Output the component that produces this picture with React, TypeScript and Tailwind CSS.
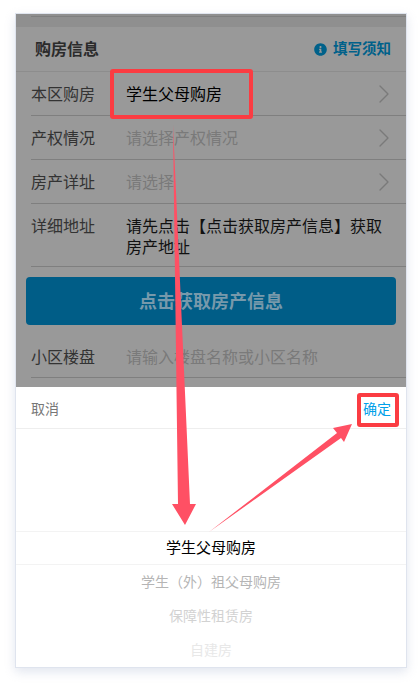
import { ChevronRight } from "lucide-react";
import { FaInfoCircle } from "react-icons/fa";

const cjk = "font-['Liberation_Sans','Noto_Sans_CJK_SC',sans-serif]";

function Row({ label, value, dark }: { label: string; value: string; dark?: boolean }) {
  return (
    <div className="ml-[15px] h-[44px] flex items-center border-b border-[#7f7f7f]">
      <span className="w-[95px] pt-[2px] text-[16px] text-[#333]">{label}</span>
      <span className={`flex-1 pt-[2px] text-[16px] ${dark ? "text-black" : "text-[#7a7a7a]"}`}>{value}</span>
      <ChevronRight className="w-[32px] h-[32px] mr-[6px] text-[#7a7a7a]" strokeWidth={1} />
    </div>
  );
}

export default function App() {
  return (
    <div className={`relative w-[420px] h-[685px] bg-white overflow-hidden ${cjk}`}>
      <div className="pt-[13px] pl-[15px] pr-[13px]">
        <div className="border border-[#dfe4ee] shadow-[0_4px_10px_rgba(190,200,220,0.45)]">
          <div className="h-[373px] bg-[#999] overflow-hidden">
            <div className="h-[13px] bg-[#8f8f8f] pl-[15px]">
              <div className="h-[3px] border-b border-[#7f7f7f]" />
            </div>
            <div className="h-[45px] flex items-center justify-between pl-[19px] pr-[15px] pt-[1px] border-b border-[#8d8d8d]">
              <span className="text-[16px] font-bold text-[#2b2b2b]">购房信息</span>
              <span className="flex items-center gap-[6px] text-[14.5px] font-bold text-[#00618a]">
                <FaInfoCircle className="w-[13px] h-[13px]" />
                填写须知
              </span>
            </div>
            <Row label="本区购房" value="学生父母购房" dark />
            <Row label="产权情况" value="请选择产权情况" />
            <Row label="房产详址" value="请选择" />
            <div className="ml-[15px] h-[63px] flex border-b border-[#7f7f7f] pt-[12px]">
              <span className="w-[95px] shrink-0 text-[16px] leading-[21px] text-[#333]">详细地址</span>
              <span className="text-[16px] leading-[21px] text-[#111] pr-[10px]">
                请先点击【点击获取房产信息】获取房产地址
              </span>
            </div>
            <div className="mx-[10px] mt-[10px] h-[48px] pt-[2px] rounded-[4px] bg-[#005d87] flex items-center justify-center text-[18px] font-bold text-[#7799ab]">
              点击获取房产信息
            </div>
            <div className="ml-[15px] mt-[10px] h-[43px] flex items-center pt-[3px] border-b border-[#7f7f7f]">
              <span className="w-[95px] text-[16px] text-[#333]">小区楼盘</span>
              <span className="text-[16px] text-[#7a7a7a]">请输入楼盘名称或小区名称</span>
            </div>
          </div>
          <div className="bg-white h-[280px]">
            <div className="h-[42px] flex items-center justify-between px-[15px] pt-[3px] border-b border-[#eee] text-[14px]">
              <span className="text-[#777]">取消</span>
              <span className="text-[#00a0e9]">确定</span>
            </div>
            <div className="h-[102px]" />
            <div className="h-[34px] pt-[1px] flex items-center justify-center border-y border-[#f3f3f3] text-[15px] text-black">
              学生父母购房
            </div>
            <div className="h-[34px] flex items-center justify-center text-[14px] text-[#b5b5b5]">
              学生（外）祖父母购房
            </div>
            <div className="h-[34px] flex items-center justify-center text-[14px] text-[#d2d2d2]">
              保障性租赁房
            </div>
            <div className="h-[34px] flex items-center justify-center text-[14px] text-[#e8e8e8]">
              自建房
            </div>
          </div>
        </div>
      </div>

      {/* annotations drawn on top of the shot */}
      <div className="absolute left-[110px] top-[69px] w-[143px] h-[50px] rounded-[3px] border-[4px] border-[#fb3c42]" />
      <div className="absolute left-[357px] top-[393px] w-[42px] h-[34px] rounded-[3px] border-[4px] border-[#fb3c42]" />
      <svg className="absolute left-0 top-0" width="420" height="685" viewBox="0 0 420 685">
        <polygon points="173,125 190,504 196,504 185,525 172,504 178,504" fill="#ff5064" />
        <polygon points="209,532 337,433 333,428 352,424 344,442 341,438" fill="#ff5064" />
      </svg>
    </div>
  );
}
